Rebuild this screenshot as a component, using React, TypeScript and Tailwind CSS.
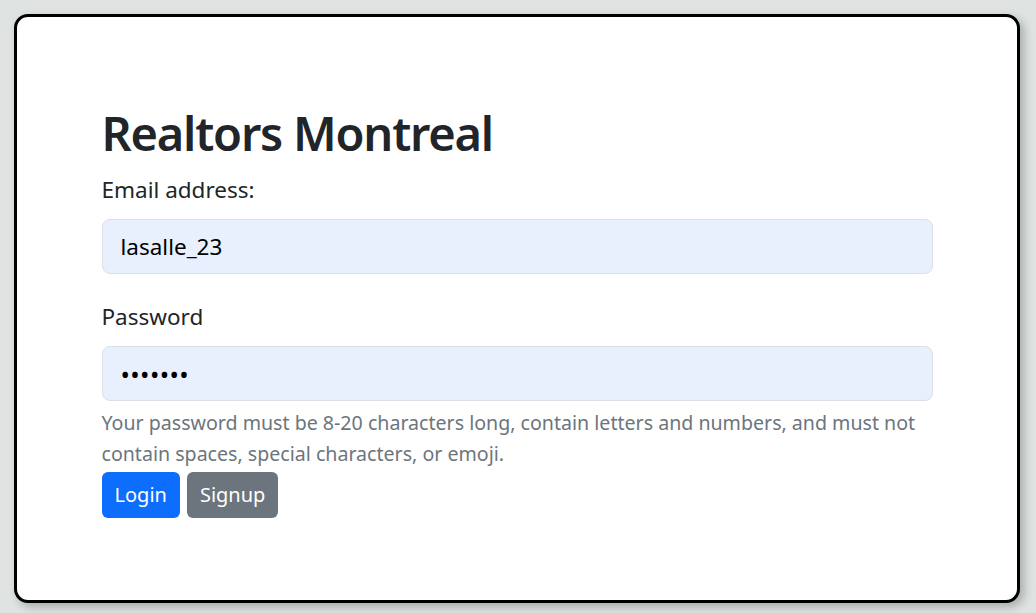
export default function App() {
  return (
    <main className="h-[613px] w-full bg-[#dfe4e2] p-[14px] pr-[16px] pb-[10px] font-['Segoe_UI','Noto_Sans',sans-serif] text-[#212529]">
      <div className="flex h-full w-full items-center justify-center rounded-[14px] border-[3px] border-black bg-white shadow-[4px_4px_10px_rgba(0,0,0,0.25)]">
        <div className="w-[831px] pt-[4px]">
          <h1 className="mb-[10px] text-[47px] font-semibold leading-[60px] tracking-[-1.2px]">Realtors Montreal</h1>
          <form onSubmit={(e) => e.preventDefault()}>
            <label className="mb-[12px] block text-[22.5px] leading-[34px]">Email address:</label>
            <input
              type="text"
              defaultValue="lasalle_23"
              className="block h-[55px] w-full rounded-[8px] border border-[#dbe0e6] bg-[#e8f0fe] px-[18px] text-[22.5px] text-black outline-none"
            />
            <label className="mb-[12px] mt-[26px] block text-[22.5px] leading-[34px]">Password</label>
            <input
              type="password"
              defaultValue="1234567"
              className="block h-[55px] w-full rounded-[8px] border border-[#dbe0e6] bg-[#e8f0fe] px-[18px] text-[25px] tracking-[0.4px] text-black outline-none"
            />
            <p className="mt-[6px] text-[19.6px] leading-[31px] text-[#6c757d]">
              Your password must be 8-20 characters long, contain letters and numbers, and must not contain spaces, special characters, or emoji.
            </p>
            <div className="mt-[3px] flex gap-[7px]">
              <button type="submit" className="h-[46px] rounded-[6px] bg-[#0d6efd] px-[13px] text-[20px] text-white">
                Login
              </button>
              <button type="button" className="h-[46px] rounded-[6px] bg-[#6c757d] px-[13px] text-[20px] text-white">
                Signup
              </button>
            </div>
          </form>
        </div>
      </div>
    </main>
  );
}
